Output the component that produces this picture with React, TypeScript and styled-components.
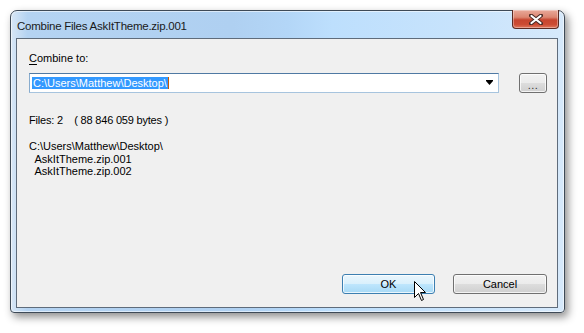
import React from "react";
import styled, { createGlobalStyle } from "styled-components";

const GlobalStyle = createGlobalStyle`
  html, body {
    margin: 0;
    padding: 0;
    background: #ffffff;
  }
`;

const Page = styled.div`
  position: relative;
  width: 584px;
  height: 333px;
  box-sizing: border-box;
  padding: 10px 19px 20px 10px;
  font-family: "Liberation Sans", Arial, sans-serif;
`;

const Window = styled.div`
  height: 100%;
  box-sizing: border-box;
  display: flex;
  flex-direction: column;
  padding: 0 6px 4px 5px;
  border: 1px solid #3e4a57;
  border-radius: 7px 7px 4px 4px;
  background: linear-gradient(
    90deg,
    #d8e7f6 0,
    #b4d3f2 3%,
    #afd0f1 40%,
    #b3d6f7 50%,
    #bddffd 58%,
    #c7e3fc 80%,
    #d6e9fb 100%
  );
  box-shadow: inset 0 0 0 1px rgba(255, 255, 255, 0.55),
    3px 4px 9px rgba(0, 0, 0, 0.45);
`;

const TitleBar = styled.div`
  height: 27px;
  display: flex;
  justify-content: space-between;
  align-items: flex-start;
`;

const Title = styled.span`
  margin-top: 8px;
  font-family: "Liberation Sans", Arial, sans-serif;
  font-size: 11.5px;
  letter-spacing: -0.25px;
  line-height: 15px;
  color: #1a1a1a;
  padding-left: 1px;
`;

const CloseButton = styled.div`
  width: 45px;
  height: 18px;
  margin-top: -1px;
  margin-right: -1px;
  display: flex;
  align-items: center;
  justify-content: center;
  border: 1px solid #5b2a22;
  border-top: none;
  border-radius: 0 0 4px 4px;
  background: linear-gradient(
    180deg,
    #e9a99a 0,
    #dc8671 40%,
    #c7452f 55%,
    #cc4b33 80%,
    #e0775c 100%
  );
  box-shadow: inset 0 0 0 1px rgba(255, 255, 255, 0.35);
`;

const Client = styled.div`
  flex: 1;
  display: flex;
  flex-direction: column;
  border: 1px solid #5f6c7b;
  background: #f0f0f0;
  padding: 13px 10px 13px 12px;
  font-family: "Liberation Sans", Arial, sans-serif;
  font-size: 11px;
  color: #000;
`;

const Label = styled.div`
  line-height: 13px;
  margin-bottom: 8px;
`;

const Accel = styled.span`
  text-decoration: underline;
  text-underline-offset: 2px;
`;

const PathRow = styled.div`
  display: flex;
  align-items: center;
  gap: 20px;
`;

const Combo = styled.div`
  width: 470px;
  height: 20px;
  box-sizing: border-box;
  display: flex;
  align-items: center;
  justify-content: space-between;
  padding: 0 4px 0 2px;
  background: #fff;
  border: 1px solid #a7c4de;
  border-top-color: #4f79a3;
  border-left-color: #88acce;
`;

const Selected = styled.span`
  background: #3399ff;
  color: #fff;
  line-height: 12px;
  padding: 0 1px;
  border-right: 1px solid #c85a00;
`;

const Button = styled.div<{ $width: number; $primary?: boolean }>`
  width: ${(p) => p.$width}px;
  height: 20px;
  box-sizing: border-box;
  display: flex;
  align-items: center;
  justify-content: center;
  border: 1px solid ${(p) => (p.$primary ? "#3c7fb1" : "#707070")};
  border-radius: 3px;
  background: ${(p) =>
    p.$primary
      ? "linear-gradient(180deg, #eaf6fd 0, #d9f0fc 50%, #bee6fd 51%, #a7d9f5 100%)"
      : "linear-gradient(180deg, #f2f2f2 0, #ebebeb 50%, #dddddd 51%, #cfcfcf 100%)"};
  box-shadow: inset 0 0 0 1px rgba(255, 255, 255, 0.75);
  font-size: 11px;
  color: #000;
`;

const Dots = styled.span`
  font-size: 11px;
  margin-top: 3px;
  letter-spacing: 0.5px;
  color: #333;
`;

const Info = styled.div`
  margin-top: 21px;
  line-height: 13px;
  white-space: pre;
  letter-spacing: -0.2px;
`;

const Listing = styled.div`
  margin-top: 13px;
  line-height: 12.5px;
  white-space: pre;
`;

const Actions = styled.div`
  margin-top: auto;
  display: flex;
  justify-content: flex-end;
  gap: 18px;
`;

const Cursor = styled.svg`
  position: absolute;
  left: 414px;
  top: 281px;
`;

export default function App() {
  return (
    <>
      <GlobalStyle />
      <Page>
        <Window>
          <TitleBar>
            <Title>Combine Files AskItTheme.zip.001</Title>
            <CloseButton>
              <svg width="14" height="11" viewBox="0 0 14 11">
                <path
                  d="M2 1.5 L12 9.5 M12 1.5 L2 9.5"
                  stroke="#4a2a25"
                  strokeWidth="4"
                  strokeLinecap="round"
                />
                <path
                  d="M2.5 2 L11.5 9 M11.5 2 L2.5 9"
                  stroke="#ffffff"
                  strokeWidth="2.2"
                  strokeLinecap="round"
                />
              </svg>
            </CloseButton>
          </TitleBar>
          <Client>
            <Label>
              <Accel>C</Accel>ombine to:
            </Label>
            <PathRow>
              <Combo>
                <Selected>C:\Users\Matthew\Desktop\</Selected>
                <svg width="8" height="6" viewBox="0 0 8 6">
                  <path d="M0 0 H7 V1 L3.5 5 L0 1 Z" fill="#000" />
                </svg>
              </Combo>
              <Button $width={28}>
                <Dots>...</Dots>
              </Button>
            </PathRow>
            <Info>Files: 2    ( 88 846 059 bytes )</Info>
            <Listing>
              {"C:\\Users\\Matthew\\Desktop\\\n  AskItTheme.zip.001\n  AskItTheme.zip.002"}
            </Listing>
            <Actions>
              <Button $width={93} $primary>
                OK
              </Button>
              <Button $width={94}>Cancel</Button>
            </Actions>
          </Client>
        </Window>
        <Cursor width="13" height="21" viewBox="0 0 13 21">
          <path
            d="M0.5 0.5 V16.5 L4.5 12.5 L7.5 19.5 L9.5 18.5 L6.5 11.5 H11.5 Z"
            fill="#fff"
            stroke="#000"
            strokeWidth="1"
            strokeLinejoin="round"
          />
        </Cursor>
      </Page>
    </>
  );
}
